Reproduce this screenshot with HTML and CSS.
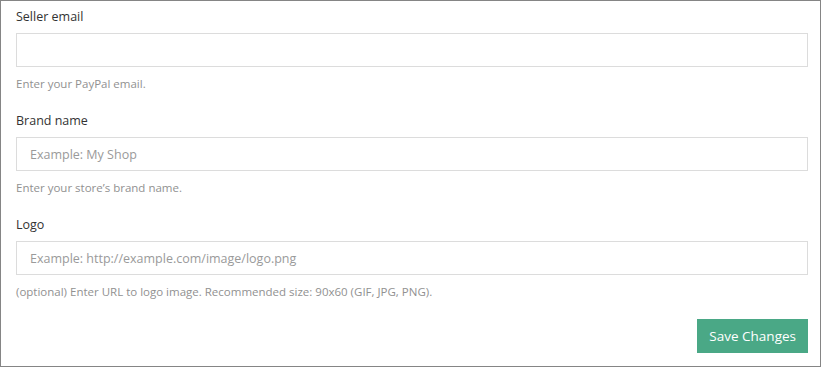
FILE: index.html
```html
<!DOCTYPE html>
<html lang="en">
<head>
  <meta charset="UTF-8">
  <title>Seller settings</title>
  <link rel="stylesheet" href="styles.css">
</head>
<body>

  <form class="panel">
    <div class="field">
      <label for="sellerEmail">Seller email</label>
      <input type="text" id="sellerEmail">
      <p class="help">Enter your PayPal email.</p>
    </div>

    <div class="field">
      <label for="brandName">Brand name</label>
      <input type="text" id="brandName" placeholder="Example: My Shop">
      <p class="help">Enter your store’s brand name.</p>
    </div>

    <div class="field">
      <label for="logoUrl">Logo</label>
      <input type="text" id="logoUrl" placeholder="Example: http://example.com/image/logo.png">
      <p class="help">(optional) Enter URL to logo image. Recommended size: 90x60 (GIF, JPG, PNG).</p>
    </div>

    <div class="actions">
      <button type="button" class="btn-save">Save Changes</button>
    </div>
  </form>

</body>
</html>
```

FILE: styles.css
```css
body {
  margin: 0;
  background: #fff;
  font-family: 'Open Sans', 'Noto Sans', sans-serif;
  color: #333;
}

.panel {
  width: 821px;
  height: 367px;
  box-sizing: border-box;
  border: 1px solid #858585;
  padding: 6px 12px 0 15px;
}

.field {
  margin-bottom: 18px;
}

.field label {
  display: block;
  font-size: 12.5px;
  line-height: 20px;
  margin-bottom: 6px;
  color: #333;
}

.field input {
  display: block;
  width: 100%;
  height: 34px;
  box-sizing: border-box;
  border: 1px solid #dcdcdc;
  padding: 0 13px;
  font-family: inherit;
  font-size: 12.5px;
  color: #555;
  outline: none;
}

.field input::placeholder {
  color: #9a9a9a;
}

.help {
  margin: 8px 0 0;
  font-size: 11.5px;
  line-height: 18px;
  color: #919191;
}

.actions {
  display: flex;
  justify-content: flex-end;
  margin-top: 3px;
}

.btn-save {
  background-color: #4aa886;
  color: white;
  border: none;
  height: 34px;
  padding: 0 12px;
  font-family: inherit;
  font-size: 13.5px;
  cursor: pointer;
}
```
